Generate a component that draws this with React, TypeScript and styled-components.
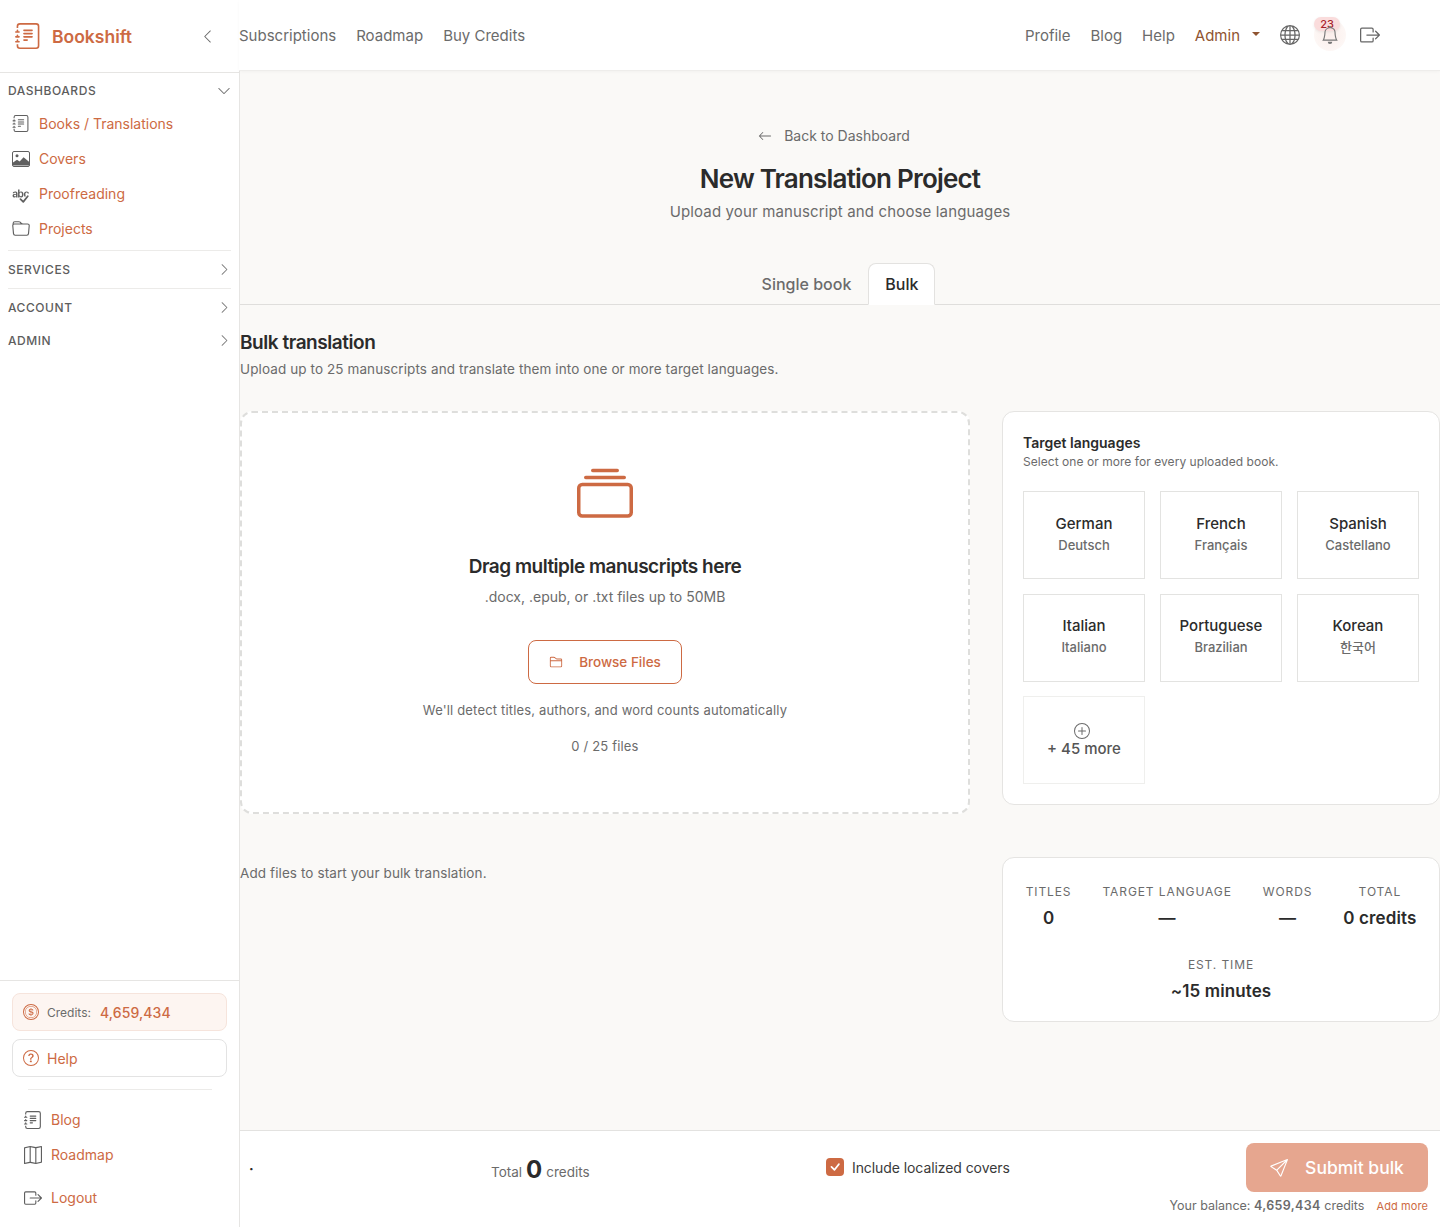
import React from "react";
import styled, { createGlobalStyle } from "styled-components";
import {
  BsJournalText, BsSpellcheck, BsFolder, BsChevronDown, BsChevronRight, BsChevronLeft, BsCoin,
  BsQuestionCircle, BsMap, BsBoxArrowRight, BsGlobe, BsBell, BsArrowLeft, BsCollection, BsFolder2,
  BsPlusCircle, BsSend, BsCheck,
} from "react-icons/bs";

const accent = "#cd6a43";
const ink = "#2b2b2b";
const muted = "#6b6b6b";
const line = "#e6e5e3";

const Global = createGlobalStyle`
  html, body { margin: 0; padding: 0; background: #faf9f7; }
  body { font-family: Inter, "Noto Sans CJK KR", sans-serif; color: ${ink}; }
  * { box-sizing: border-box; }
`;

const Shell = styled.div`
  display: flex;
  height: 1227px;
  overflow: hidden;
`;

const Sidebar = styled.aside`
  width: 240px;
  flex: none;
  background: #fff;
  border-right: 1px solid ${line};
  display: flex;
  flex-direction: column;
`;

const Brand = styled.div`
  height: 73px;
  flex: none;
  display: flex;
  align-items: center;
  padding: 0 24px 0 15px;
  border-bottom: 1px solid ${line};
  color: ${accent};
  font-size: 17.5px;
  font-weight: 600;
  gap: 11px;
  & > span { flex: 1; }
  & > svg:last-child { color: ${muted}; }
`;

const Nav = styled.nav`
  flex: 1;
  padding: 2px 8px 0;
`;

const SectionHead = styled.div<{ $h: number }>`
  height: ${(p) => p.$h}px;
  display: flex;
  align-items: center;
  justify-content: space-between;
  font-size: 12px;
  font-weight: 500;
  letter-spacing: 0.55px;
  color: #5d5d5d;
  & > svg { color: #777; }
`;

const NavItem = styled.div<{ $inset?: boolean }>`
  height: 35px;
  display: flex;
  align-items: center;
  gap: 9px;
  padding-left: ${(p) => (p.$inset ? 12 : 4)}px;
  font-size: 14px;
  color: ${accent};
  & > svg { color: #5f5f5f; flex: none; width: 18px; }
`;

const Rule = styled.div`
  height: 1px;
  background: #ecebe9;
`;

const SideBottom = styled.div`
  border-top: 1px solid ${line};
  padding: 12px 12px 0;
  height: 247px;
  flex: none;
`;

const SideBox = styled.div<{ $tint?: boolean }>`
  height: 38px;
  width: 215px;
  margin-bottom: 8px;
  border-radius: 8px;
  display: flex;
  align-items: center;
  gap: 8px;
  padding-left: 10px;
  font-size: 14px;
  color: ${accent};
  border: 1px solid ${(p) => (p.$tint ? "#f6e4dc" : "#e3e3e3")};
  background: ${(p) => (p.$tint ? "#fdf5f1" : "#fff")};
`;

const CreditsLabel = styled.span`
  font-size: 12px;
  color: ${muted};
`;

const CreditsValue = styled.span`
  margin-left: 1px;
  font-size: 14px;
  font-weight: 500;
  letter-spacing: 0.1px;
`;

const SideRule = styled(Rule)`
  margin: 12px 15px 12px 16px;
`;

const Gap = styled.div<{ $h: number }>`
  height: ${(p) => p.$h}px;
`;

const Main = styled.main`
  flex: 1;
  min-width: 0;
  display: flex;
  flex-direction: column;
`;

const Topbar = styled.header`
  height: 71px;
  flex: none;
  background: #fff;
  border-bottom: 1px solid #eeedeb;
  box-shadow: 0 1px 3px rgba(0, 0, 0, 0.03);
  display: flex;
  align-items: center;
  justify-content: space-between;
  padding-right: 60px;
  margin-left: -1px;
`;

const TopLinks = styled.div`
  display: flex;
  align-items: center;
  gap: 20px;
  font-size: 15px;
  color: ${muted};
`;

const AdminLink = styled.span`
  color: #8f5431;
  display: inline-flex;
  align-items: center;
  gap: 12px;
  &::after {
    content: "";
    border-top: 4px solid #8f5431;
    border-left: 4px solid transparent;
    border-right: 4px solid transparent;
    margin-top: -2px;
  }
`;

const TopIcon = styled.span`
  display: inline-flex;
  color: #666;
`;

const BellWrap = styled.span`
  position: relative;
  width: 32px;
  height: 32px;
  display: inline-flex;
  align-items: center;
  justify-content: center;
  color: #777;
  border-radius: 50%;
  background: radial-gradient(circle, #fbeeeb 0%, #fdf7f5 70%, #fff 100%);
  margin: 0 -6px;
`;

const Badge = styled.span`
  position: absolute;
  top: -2px;
  left: 0;
  width: 26px;
  height: 14px;
  border-radius: 8px;
  background: #fadcdc;
  box-shadow: 0 1px 3px rgba(0, 0, 0, 0.08);
  color: #a8222c;
  font-size: 11px;
  font-weight: 500;
  line-height: 15px;
  text-align: center;
`;

const BellGlyph = styled(BsBell)`
  position: relative;
`;

const Content = styled.div`
  flex: 1;
  min-height: 0;
  display: flex;
  flex-direction: column;
`;

const Hero = styled.div`
  padding-top: 56px;
  display: flex;
  flex-direction: column;
  align-items: center;
`;

const BackLink = styled.div`
  display: flex;
  align-items: center;
  gap: 12px;
  font-size: 14px;
  line-height: 18px;
  color: ${muted};
  margin-left: -12px;
`;

const Title = styled.h1`
  margin: 16px 0 0;
  font-size: 26px;
  line-height: 36px;
  font-weight: 600;
  letter-spacing: -0.8px;
  color: ${ink};
`;

const Subtitle = styled.p`
  margin: 4px 0 0;
  font-size: 15px;
  line-height: 22px;
  letter-spacing: 0.14px;
  color: ${muted};
`;

const Tabs = styled.div`
  margin-top: 40px;
  height: 42px;
  border-bottom: 1px solid #dfdedc;
  display: flex;
  justify-content: center;
`;

const Tab = styled.div<{ $active?: boolean }>`
  height: 42px;
  padding: 0 16px;
  display: flex;
  align-items: center;
  font-size: 16px;
  font-weight: 500;
  border-radius: 8px 8px 0 0;
  color: ${(p) => (p.$active ? ink : muted)};
  background: ${(p) => (p.$active ? "#fff" : "transparent")};
  border: 1px solid ${(p) => (p.$active ? "#e3e2e0" : "transparent")};
  border-bottom: 1px solid ${(p) => (p.$active ? "#fff" : "transparent")};
`;

const BulkHead = styled.h2`
  margin: 25px 0 0;
  font-size: 19px;
  line-height: 26px;
  font-weight: 600;
  letter-spacing: -0.45px;
`;

const BulkDesc = styled.p`
  margin: 3px 0 0;
  font-size: 13.5px;
  line-height: 20px;
  letter-spacing: 0.1px;
  color: ${muted};
`;

const Columns = styled.div`
  margin-top: 32px;
  display: grid;
  grid-template-columns: 730px 438px;
  column-gap: 32px;
  align-items: start;
`;

const Drop = styled.div`
  height: 403px;
  background: #fff;
  border: 2px dashed #dededc;
  border-radius: 12px;
  display: flex;
  flex-direction: column;
  align-items: center;
  padding-top: 54px;
  color: ${accent};
`;

const DropTitle = styled.h3`
  margin: 31px 0 0;
  font-size: 19px;
  line-height: 26px;
  font-weight: 600;
  letter-spacing: -0.5px;
  color: ${ink};
`;

const DropHint = styled.p`
  margin: 7px 0 0;
  font-size: 14px;
  line-height: 20px;
  color: ${muted};
`;

const Browse = styled.div`
  margin-top: 33px;
  width: 154px;
  height: 44px;
  border: 1px solid ${accent};
  border-radius: 8px;
  display: flex;
  align-items: center;
  justify-content: center;
  gap: 16px;
  font-size: 13.5px;
  font-weight: 500;
  color: ${accent};
`;

const DropNote = styled.p<{ $mt: number }>`
  margin: ${(p) => p.$mt}px 0 0;
  font-size: 13px;
  line-height: 20px;
  letter-spacing: 0.17px;
  color: ${muted};
`;

const Card = styled.section`
  background: #fff;
  border: 1px solid #e5e4e2;
  border-radius: 12px;
`;

const LangCard = styled(Card)`
  height: 394px;
  padding: 21px 20px;
`;

const CardTitle = styled.div`
  font-size: 14px;
  line-height: 20px;
  font-weight: 600;
`;

const CardSub = styled.div`
  font-size: 12px;
  line-height: 18px;
  letter-spacing: 0.05px;
  color: ${muted};
`;

const LangGrid = styled.div`
  margin-top: 20px;
  display: grid;
  grid-template-columns: repeat(3, 122px);
  grid-auto-rows: 88px;
  column-gap: 15px;
  row-gap: 14.6px;
`;

const Lang = styled.div<{ $faint?: boolean }>`
  border: 1px solid ${(p) => (p.$faint ? "#efefed" : "#e3e3e1")};
  display: flex;
  flex-direction: column;
  align-items: center;
  padding-top: ${(p) => (p.$faint ? 26 : 21.6)}px;
`;

const LangName = styled.div`
  font-size: 15px;
  line-height: 20px;
  font-weight: 500;
`;

const LangNative = styled.div`
  margin-top: 2px;
  font-size: 13px;
  line-height: 18px;
  font-weight: 500;
  color: ${muted};
`;

const MoreIcon = styled.div`
  color: ${muted};
  display: flex;
  margin-left: -4px;
`;

const More = styled.div`
  font-size: 15px;
  line-height: 20px;
  font-weight: 500;
  color: #555;
`;

const SecondRow = styled(Columns)`
  margin-top: 43px;
`;

const AddFiles = styled.p`
  margin: 6px 0 0;
  font-size: 13.5px;
  line-height: 20px;
  letter-spacing: 0.1px;
  color: ${muted};
`;

const Stats = styled(Card)`
  height: 165px;
  padding: 25px 0 0;
  display: flex;
  flex-wrap: wrap;
  justify-content: center;
  column-gap: 31px;
  row-gap: 25px;
  align-content: flex-start;
`;

const Stat = styled.div`
  display: flex;
  flex-direction: column;
  align-items: center;
`;

const StatLabel = styled.div`
  font-size: 12px;
  line-height: 18px;
  letter-spacing: 0.9px;
  text-transform: uppercase;
  color: ${muted};
`;

const StatValue = styled.div`
  margin-top: 4px;
  font-size: 17px;
  line-height: 26px;
  font-weight: 600;
  letter-spacing: 0.1px;
`;

const Footer = styled.footer`
  height: 97px;
  flex: none;
  background: #fff;
  border-top: 1px solid #e3e2e0;
  display: flex;
  padding: 12px 12px 0 9px;
  position: relative;
`;

const Dot = styled.span`
  font-size: 14px;
  font-weight: 700;
  line-height: 20px;
  margin-top: 16px;
  color: ${ink};
  width: 242px;
`;

const TotalBlock = styled.div`
  width: 335px;
  height: 50px;
  display: flex;
  align-items: center;
  gap: 4px;
  font-size: 13.5px;
  color: ${muted};
  padding-top: 7px;
  & > b {
    font-size: 24px;
    font-weight: 700;
    color: ${ink};
    line-height: 24px;
    margin-top: -4px;
  }
`;

const Check = styled.div`
  height: 50px;
  display: flex;
  align-items: center;
  gap: 8px;
  font-size: 14px;
  letter-spacing: -0.08px;
  color: #3a3a3a;
  padding-bottom: 2px;
`;

const CheckBox = styled.span`
  width: 18px;
  height: 18px;
  border-radius: 4px;
  background: ${accent};
  color: #fff;
  display: inline-flex;
  align-items: center;
  justify-content: center;
`;

const Right = styled.div`
  margin-left: auto;
  display: flex;
  flex-direction: column;
  align-items: flex-end;
`;

const Submit = styled.div`
  width: 182px;
  height: 49px;
  border-radius: 8px;
  background: #e6a68f;
  color: #fff;
  display: flex;
  align-items: center;
  justify-content: center;
  gap: 17px;
  font-size: 17.5px;
  font-weight: 500;
`;

const Balance = styled.div`
  margin-top: 5px;
  font-size: 12.5px;
  line-height: 18px;
  color: ${muted};
  display: flex;
  align-items: baseline;
  gap: 12px;
  & b { font-weight: 600; letter-spacing: 0.35px; }
`;

const AddMore = styled.span`
  font-size: 11px;
  letter-spacing: 0.1px;
  color: ${accent};
`;

const CoverIcon = () => (
  <svg width="18" height="16" viewBox="0 0 18 16" fill="none">
    <rect x="0.5" y="0.5" width="17" height="15" rx="1.5" stroke="currentColor" />
    <circle cx="5" cy="4.8" r="1.5" fill="currentColor" />
    <path d="M1 14.6v-3.2l4-2.6 2.6 1.6 4-4.2 5.4 4.6v3.8z" fill="currentColor" />
  </svg>
);

const langs = [
  ["German", "Deutsch"], ["French", "Français"], ["Spanish", "Castellano"],
  ["Italian", "Italiano"], ["Portuguese", "Brazilian"], ["Korean", "한국어"],
];

export default function App() {
  return (
    <>
      <Global />
      <Shell>
        <Sidebar>
          <Brand>
            <BsJournalText size={26} />
            <span>Bookshift</span>
            <BsChevronLeft size={15} />
          </Brand>
          <Nav>
            <SectionHead $h={31}>DASHBOARDS <BsChevronDown size={14} /></SectionHead>
            <NavItem><BsJournalText size={17} />Books / Translations</NavItem>
            <NavItem><CoverIcon />Covers</NavItem>
            <NavItem><BsSpellcheck size={18} />Proofreading</NavItem>
            <NavItem><BsFolder size={18} />Projects</NavItem>
            <Gap $h={4} />
            <Rule />
            <SectionHead $h={37}>SERVICES <BsChevronRight size={13} /></SectionHead>
            <Rule />
            <SectionHead $h={37}>ACCOUNT <BsChevronRight size={13} /></SectionHead>
            <SectionHead $h={28}>ADMIN <BsChevronRight size={13} /></SectionHead>
          </Nav>
          <SideBottom>
            <SideBox $tint>
              <BsCoin size={16} />
              <CreditsLabel>Credits:</CreditsLabel>
              <CreditsValue>4,659,434</CreditsValue>
            </SideBox>
            <SideBox><BsQuestionCircle size={16} />Help</SideBox>
            <SideRule />
            <NavItem $inset><BsJournalText size={18} />Blog</NavItem>
            <NavItem $inset><BsMap size={18} />Roadmap</NavItem>
            <Gap $h={8} />
            <NavItem $inset><BsBoxArrowRight size={18} />Logout</NavItem>
          </SideBottom>
        </Sidebar>
        <Main>
          <Topbar>
            <TopLinks>
              <span>Subscriptions</span>
              <span>Roadmap</span>
              <span>Buy Credits</span>
            </TopLinks>
            <TopLinks>
              <span>Profile</span>
              <span>Blog</span>
              <span>Help</span>
              <AdminLink>Admin</AdminLink>
              <TopIcon><BsGlobe size={20} /></TopIcon>
              <BellWrap>
                <Badge>23</Badge>
                <BellGlyph size={18} />
              </BellWrap>
              <TopIcon><BsBoxArrowRight size={20} /></TopIcon>
            </TopLinks>
          </Topbar>
          <Content>
            <Hero>
              <BackLink><BsArrowLeft size={14} />Back to Dashboard</BackLink>
              <Title>New Translation Project</Title>
              <Subtitle>Upload your manuscript and choose languages</Subtitle>
            </Hero>
            <Tabs>
              <Tab>Single book</Tab>
              <Tab $active>Bulk</Tab>
            </Tabs>
            <BulkHead>Bulk translation</BulkHead>
            <BulkDesc>Upload up to 25 manuscripts and translate them into one or more target languages.</BulkDesc>
            <Columns>
              <Drop>
                <BsCollection size={56} />
                <DropTitle>Drag multiple manuscripts here</DropTitle>
                <DropHint>.docx, .epub, or .txt files up to 50MB</DropHint>
                <Browse><BsFolder2 size={14} />Browse Files</Browse>
                <DropNote $mt={16}>We'll detect titles, authors, and word counts automatically</DropNote>
                <DropNote $mt={16}>0 / 25 files</DropNote>
              </Drop>
              <LangCard>
                <CardTitle>Target languages</CardTitle>
                <CardSub>Select one or more for every uploaded book.</CardSub>
                <LangGrid>
                  {langs.map(([name, native]) => (
                    <Lang key={name}>
                      <LangName>{name}</LangName>
                      <LangNative>{native}</LangNative>
                    </Lang>
                  ))}
                  <Lang $faint>
                    <MoreIcon><BsPlusCircle size={16} /></MoreIcon>
                    <More>+ 45 more</More>
                  </Lang>
                </LangGrid>
              </LangCard>
            </Columns>
            <SecondRow>
              <AddFiles>Add files to start your bulk translation.</AddFiles>
              <Stats>
                <Stat><StatLabel>Titles</StatLabel><StatValue>0</StatValue></Stat>
                <Stat><StatLabel>Target language</StatLabel><StatValue>—</StatValue></Stat>
                <Stat><StatLabel>Words</StatLabel><StatValue>—</StatValue></Stat>
                <Stat><StatLabel>Total</StatLabel><StatValue>0 credits</StatValue></Stat>
                <Stat><StatLabel>Est. time</StatLabel><StatValue>~15 minutes</StatValue></Stat>
              </Stats>
            </SecondRow>
          </Content>
          <Footer>
            <Dot>·</Dot>
            <TotalBlock>Total <b>0</b> credits</TotalBlock>
            <Check>
              <CheckBox><BsCheck size={18} /></CheckBox>
              Include localized covers
            </Check>
            <Right>
              <Submit><BsSend size={18} />Submit bulk</Submit>
              <Balance>
                <span>Your balance: <b>4,659,434</b> credits</span>
                <AddMore>Add more</AddMore>
              </Balance>
            </Right>
          </Footer>
        </Main>
      </Shell>
    </>
  );
}
